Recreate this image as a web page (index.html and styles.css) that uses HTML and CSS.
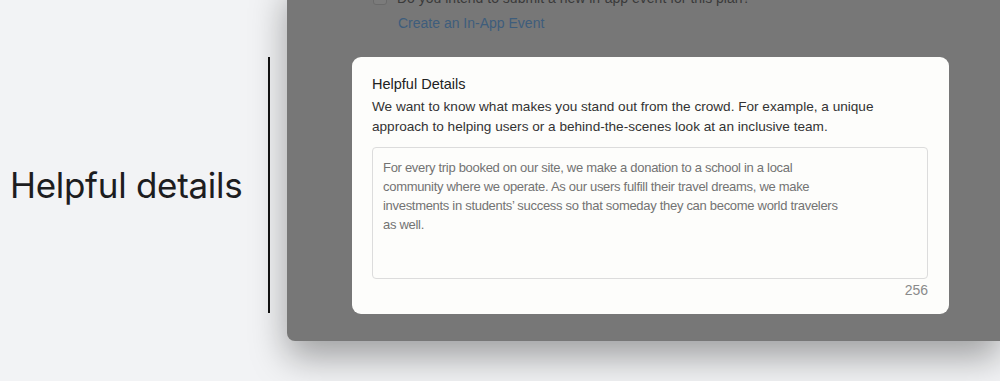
FILE: index.html
```html
<!DOCTYPE html>
<html lang="en">
<head>
    <meta charset="UTF-8">
    <meta name="viewport" content="width=device-width, initial-scale=1.0">
    <title>Helpful details</title>
    <link rel="stylesheet" href="styles.css">
</head>
<body>
    <div class="stage">
        <div class="side">
            <h1 class="caption">Helpful details</h1>
            <div class="divider"></div>
        </div>

        <div class="window">
            <div class="question">
                <div class="check-row">
                    <span class="checkbox"></span>
                    <span>Do you intend to submit a new in-app event for this plan?</span>
                </div>
                <a class="link" href="#">Create an In-App Event</a>
            </div>

            <div class="card">
                <h2 class="card-title">Helpful Details</h2>
                <p class="card-text">We want to know what makes you stand out from the crowd. For example, a unique<br>approach to helping users or a behind-the-scenes look at an inclusive team.</p>
                <div class="field">
                    For every trip booked on our site, we make a donation to a school in a local<br>
                    community where we operate. As our users fulfill their travel dreams, we make<br>
                    investments in students’ success so that someday they can become world travelers<br>
                    as well.
                </div>
                <div class="counter">256</div>
            </div>
        </div>
    </div>
</body>
</html>
```

FILE: styles.css
```css
body {
    margin: 0;
    height: 381px;
    overflow: hidden;
    background-color: #f2f3f5;
    font-family: "Liberation Sans", Arial, sans-serif;
}
.stage {
    display: flex;
    align-items: flex-start;
}
.side {
    display: flex;
    align-items: center;
    margin-top: 57px;
}
.caption {
    width: 258px;
    margin: 0;
    padding-left: 10px;
    box-sizing: border-box;
    font-family: Inter, sans-serif;
    font-size: 35px;
    font-weight: 400;
    color: #1d1d1f;
    letter-spacing: -0.3px;
}
.divider {
    width: 2px;
    height: 256px;
    margin-left: 10px;
    background-color: #111;
}
.window {
    flex: 1;
    margin-left: 17px;
    margin-top: -20px;
    padding: 0 0 27px 65px;
    background-color: #777777;
    border-bottom-left-radius: 8px;
    box-shadow: 0 16px 36px rgba(0,0,0,0.35);
}
.question {
    box-sizing: border-box;
    height: 77px;
    padding: 8px 0 0 21px;
    font-size: 14px;
    color: #3a3a3a;
}
.check-row {
    display: flex;
    align-items: center;
    gap: 10px;
    height: 20px;
}
.checkbox {
    width: 12px;
    height: 12px;
    border: 1px solid #6a6a6a;
    border-radius: 3px;
    background-color: #7b7b7b;
}
.link {
    display: block;
    margin: 7px 0 0 25px;
    color: #3e5d7c;
    text-decoration: none;
}
.card {
    width: 597px;
    box-sizing: border-box;
    padding: 18px 21px 16px 20px;
    background-color: #fdfdfb;
    border-radius: 9px;
}
.card-title {
    margin: 0;
    font-size: 14.5px;
    font-weight: 500;
    color: #222;
    line-height: 18px;
}
.card-text {
    margin: 4px 0 10px;
    font-size: 13.6px;
    line-height: 20px;
    color: #333;
}
.field {
    height: 110px;
    padding: 10px;
    border: 1px solid #dcdcdc;
    border-radius: 4px;
    font-size: 13px;
    letter-spacing: -0.3px;
    line-height: 19px;
    color: #737373;
    background-color: #fdfdfb;
}
.counter {
    margin-top: 3px;
    text-align: right;
    font-size: 14px;
    line-height: 16px;
    color: #8a8a8a;
}
```
